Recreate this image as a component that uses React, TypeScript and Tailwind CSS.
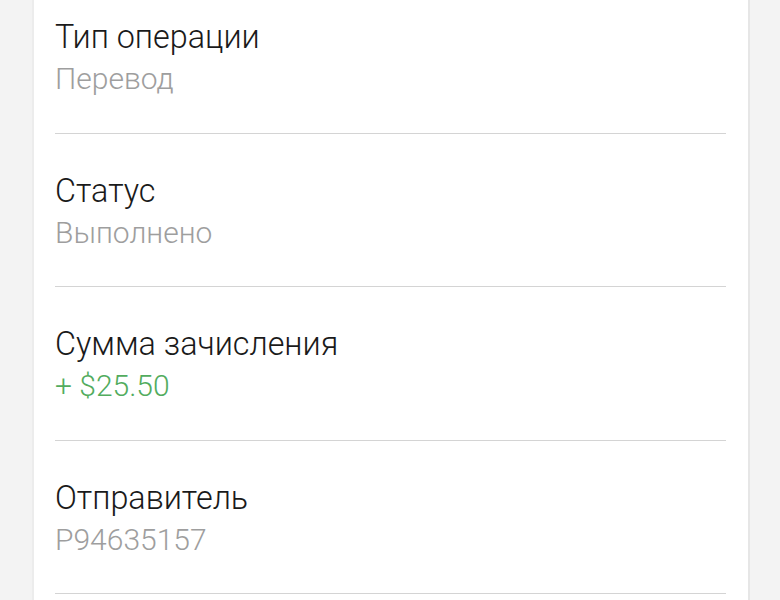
import React from "react";

const rows = [
  { label: "Тип операции", value: "Перевод", valueClass: "text-[#9e9e9e]" },
  { label: "Статус", value: "Выполнено", valueClass: "text-[#9e9e9e]" },
  { label: "Сумма зачисления", value: "+ $25.50", valueClass: "text-[#52ac5e]" },
  { label: "Отправитель", value: "P94635157", valueClass: "text-[#9e9e9e]" },
];

export default function App() {
  return (
    <div
      className="w-[780px] h-[600px] overflow-hidden bg-[#f3f3f3] flex justify-center"
      style={{ fontFamily: "Roboto, 'Noto Sans', sans-serif" }}
    >
      <div className="ml-[2px] w-[718px] h-full bg-white border-l-2 border-r-2 border-l-[#ececec] border-r-[#e6e6e6] pl-[21px] pr-[22px]">
        <div className="mt-[-20px] flex flex-col">
          {rows.map((r) => (
            <div key={r.label} className="pt-[36px] pb-[32.5px] border-b border-[#d4d4d4]">
              <div className="text-[32.3px] leading-[42px] font-light text-[#1a1a1a]">{r.label}</div>
              <div className={`text-[30px] leading-[42px] font-light ${r.valueClass}`}>{r.value}</div>
            </div>
          ))}
        </div>
      </div>
    </div>
  );
}
